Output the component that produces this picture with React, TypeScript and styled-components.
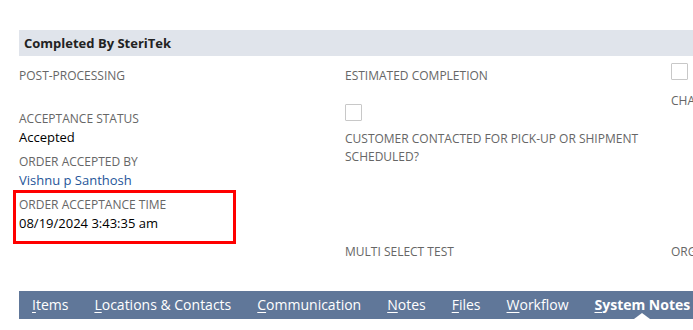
import React, { FC } from 'react';
import styled, { createGlobalStyle } from 'styled-components';

const GlobalStyle = createGlobalStyle`
  html, body {
    margin: 0;
    padding: 0;
    background: #fff;
    overflow: hidden;
  }
  body {
    font-family: 'Open Sans', 'Liberation Sans', sans-serif;
  }
`;

const Page = styled.div`
  width: 1100px;
  padding: 30px 0 0 19px;
`;

const SectionHeader = styled.div`
  height: 26px;
  line-height: 26px;
  background: #e0e4eb;
  padding-left: 5px;
  font-size: 13px;
  font-weight: 700;
  color: #222;
`;

const Fields = styled.div`
  display: grid;
  grid-template-columns: 326px 326px 326px;
  box-sizing: border-box;
  padding-top: 11px;
  height: 225px;
`;

const Column = styled.div`
  display: flex;
  flex-direction: column;
  align-items: flex-start;
`;

const Field = styled.div<{ $top?: number; $gap?: number; $highlight?: boolean }>`
  margin-top: ${(p) => p.$top ?? 0}px;
  margin-bottom: ${(p) => p.$gap ?? 7}px;
  width: ${(p) => (p.$highlight ? '211px' : 'auto')};
  padding-bottom: ${(p) => (p.$highlight ? '6px' : '0')};
  outline: ${(p) => (p.$highlight ? '3px solid #ff0000' : 'none')};
  outline-offset: 3px;
`;

const Label = styled.div<{ $width?: number }>`
  font-size: 12px;
  line-height: 18px;
  color: #666;
  text-transform: uppercase;
  max-width: ${(p) => p.$width ?? 300}px;
`;

const Value = styled.div<{ $link?: boolean }>`
  font-size: 13px;
  line-height: 18px;
  min-height: 18px;
  color: ${(p) => (p.$link ? '#255599' : '#000')};
`;

const Checkbox = styled.div<{ $top?: number; $gap?: number }>`
  width: 15px;
  height: 15px;
  border: 1px solid #c8c8c8;
  border-radius: 1px;
  background: #fff;
  margin-top: ${(p) => p.$top ?? 0}px;
  margin-bottom: ${(p) => p.$gap ?? 9}px;
`;

const TabBar = styled.div`
  display: flex;
  height: 28px;
  background: #607799;
  margin-top: 10px;
`;

const Tab = styled.div<{ $active?: boolean }>`
  position: relative;
  padding: 0 13px;
  line-height: 28px;
  font-size: 14px;
  color: #fff;
  font-weight: ${(p) => (p.$active ? 700 : 400)};
  white-space: nowrap;

  u {
    text-decoration-thickness: 1px;
    text-underline-offset: 2px;
  }

  &::after {
    content: '';
    display: ${(p) => (p.$active ? 'block' : 'none')};
    position: absolute;
    left: 50%;
    bottom: 0;
    margin-left: -8px;
    border-left: 8px solid transparent;
    border-right: 8px solid transparent;
    border-bottom: 6px solid #fff;
  }
`;

const tabs = [
  { key: 'I', rest: 'tems' },
  { key: 'L', rest: 'ocations & Contacts' },
  { key: 'C', rest: 'ommunication' },
  { key: 'N', rest: 'otes' },
  { key: 'F', rest: 'iles' },
  { key: 'W', rest: 'orkflow' },
  { key: 'S', rest: 'ystem Notes', active: true },
];

const App: FC = () => (
  <Page>
    <GlobalStyle />
    <SectionHeader>Completed By SteriTek</SectionHeader>
    <Fields>
      <Column>
        <Field>
          <Label>Post-Processing</Label>
          <Value />
        </Field>
        <Field>
          <Label>Acceptance Status</Label>
          <Value>Accepted</Value>
        </Field>
        <Field>
          <Label>Order Accepted By</Label>
          <Value $link>Vishnu p Santhosh</Value>
        </Field>
        <Field $highlight>
          <Label>Order Acceptance Time</Label>
          <Value>08/19/2024 3:43:35 am</Value>
        </Field>
      </Column>
      <Column>
        <Field $gap={1}>
          <Label>Estimated Completion</Label>
          <Value />
        </Field>
        <Checkbox />
        <Field>
          <Label>Customer Contacted for Pick-up or Shipment Scheduled?</Label>
        </Field>
        <Field $top={70}>
          <Label>Multi Select Test</Label>
        </Field>
      </Column>
      <Column>
        <Checkbox $top={-4} $gap={12} />
        <Field>
          <Label>Change Order Required</Label>
        </Field>
        <Field $top={126}>
          <Label>Org</Label>
        </Field>
      </Column>
    </Fields>
    <TabBar>
      {tabs.map((t) => (
        <Tab key={t.key} $active={t.active}>
          <u>{t.key}</u>
          {t.rest}
        </Tab>
      ))}
    </TabBar>
  </Page>
);

export default App;
